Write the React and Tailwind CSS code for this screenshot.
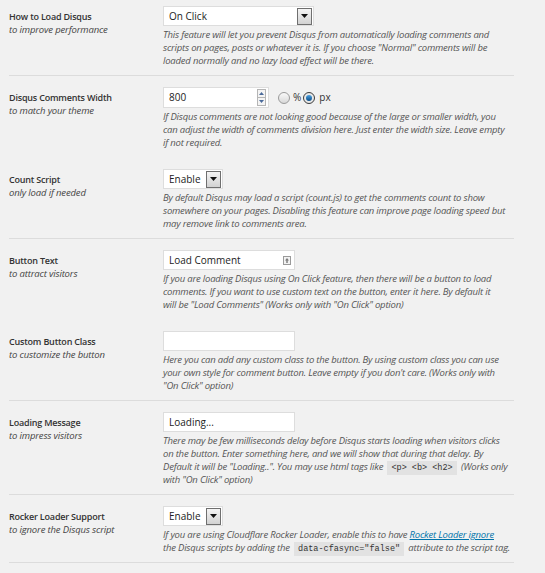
import React from 'react';

const Arrow = () => (
  <svg width="7" height="4" viewBox="0 0 7 4">
    <path d="M0 0h7L3.5 4z" fill="#111" />
  </svg>
);

const Select = ({ value, wide }) => (
  <div
    className={`flex h-[20px] items-center justify-between border border-[#dddddd] bg-white pl-[5px] pr-px ${
      wide ? 'w-[151px]' : 'w-[60px]'
    }`}
  >
    <span className="text-[10px] text-[#222]">{value}</span>
    <span className="flex h-[17px] w-[15px] items-center justify-center border border-[#6f6f6f] bg-gradient-to-b from-[#f4f4f4] to-[#d2d2d2]">
      <Arrow />
    </span>
  </div>
);

const TextInput = ({ value, icon }) => (
  <div className="flex h-[20px] w-[132px] items-center justify-between border border-[#dddddd] bg-white pl-[5px] pr-[3px]">
    <span className="text-[10px] text-[#222]">{value}</span>
    {icon && (
      <svg width="8" height="9" viewBox="0 0 8 9">
        <rect x="0.5" y="0.5" width="7" height="8" fill="#f2f2f2" stroke="#9a9a9a" />
        <path d="M4 2L2 4.5h1.3V7h1.4V4.5H6z" fill="#7a7a7a" />
      </svg>
    )}
  </div>
);

const Code = ({ children }) => (
  <code className="mx-[2px] bg-[#e2e2e2] px-[4px] py-[2px] font-['Liberation_Mono',monospace] text-[8.5px] leading-none not-italic tracking-normal text-[#333]">
    {children}
  </code>
);

const Radio = ({ checked }) =>
  checked ? (
    <span className="flex h-[12px] w-[12px] items-center justify-center rounded-full border border-[#3c3c3c] bg-[#e8e8e8]">
      <span className="block h-[6px] w-[6px] rounded-full bg-gradient-to-b from-[#4aa0e0] to-[#0a4f8a]" />
    </span>
  ) : (
    <span className="block h-[12px] w-[12px] rounded-full border border-[#9a9a9a] bg-gradient-to-b from-[#fafafa] to-[#d8d8d8]" />
  );

const WidthInput = () => (
  <div className="flex items-center">
    <div className="flex h-[21px] w-[106px] items-center justify-between border border-[#dddddd] bg-white pl-[5px] pr-[2px]">
      <span className="text-[10px] text-[#222]">800</span>
      <span className="flex h-[17px] w-[9px] flex-col border border-[#b5b5b5] bg-[#f4f4f4]">
        <span className="flex flex-1 items-center justify-center border-b border-[#b5b5b5]">
          <svg width="5" height="3" viewBox="0 0 5 3">
            <path d="M0 3h5L2.5 0z" fill="#4a6a9a" />
          </svg>
        </span>
        <span className="flex flex-1 items-center justify-center">
          <svg width="5" height="3" viewBox="0 0 5 3">
            <path d="M0 0h5L2.5 3z" fill="#4a6a9a" />
          </svg>
        </span>
      </span>
    </div>
    <span className="ml-[9px]"><Radio /></span>
    <span className="ml-[3px] text-[10px] text-[#333]">%</span>
    <span className="ml-[2px]"><Radio checked /></span>
    <span className="ml-[4px] text-[10px] text-[#333]">px</span>
  </div>
);

const rows = [
  {
    label: 'How to Load Disqus',
    sub: 'to improve performance',
    control: <Select value="On Click" wide />,
    line: true,
    desc: [
      'This feature will let you prevent Disqus from automatically loading comments and',
      'scripts on pages, posts or whatever it is. If you choose "Normal" comments will be',
      'loaded normally and no lazy load effect will be there.',
    ],
  },
  {
    label: 'Disqus Comments Width',
    sub: 'to match your theme',
    control: <WidthInput />,
    line: false,
    desc: [
      'If Disqus comments are not looking good because of the large or smaller width, you',
      'can adjust the width of comments division here. Just enter the width size. Leave empty',
      'if not required.',
    ],
  },
  {
    label: 'Count Script',
    sub: 'only load if needed',
    control: <Select value="Enable" />,
    line: true,
    desc: [
      'By default Disqus may load a script (count.js) to get the comments count to show',
      'somewhere on your pages. Disabling this feature can improve page loading speed but',
      'may remove link to comments area.',
    ],
  },
  {
    label: 'Button Text',
    sub: 'to attract visitors',
    control: <TextInput value="Load Comment" icon />,
    line: false,
    desc: [
      'If you are loading Disqus using On Click feature, then there will be a button to load',
      'comments. If you want to use custom text on the button, enter it here. By default it',
      'will be "Load Comments" (Works only with "On Click" option)',
    ],
  },
  {
    label: 'Custom Button Class',
    sub: 'to customize the button',
    control: <TextInput value="" />,
    line: true,
    desc: [
      'Here you can add any custom class to the button. By using custom class you can use',
      "your own style for comment button. Leave empty if you don't care. (Works only with",
      '"On Click" option)',
    ],
  },
  {
    label: 'Loading Message',
    sub: 'to impress visitors',
    control: <TextInput value="Loading..." />,
    line: true,
    desc: [
      'There may be few milliseconds delay before Disqus starts loading when visitors clicks',
      'on the button. Enter something here, and we will show that during that delay. By',
      <>
        Default it will be "Loading..". You may use html tags like <Code>{'<p>  <b>  <h2>'}</Code> (Works only
      </>,
      'with "On Click" option)',
    ],
  },
  {
    label: 'Rocker Loader Support',
    sub: 'to ignore the Disqus script',
    control: <Select value="Enable" />,
    line: true,
    desc: [
      <>
        If you are using Cloudflare Rocker Loader, enable this to have{' '}
        <a href="#" className="text-[#0073aa] underline">Rocket Loader ignore</a>
      </>,
      <>
        the Disqus scripts by adding the <Code>data-cfasync="false"</Code> attribute to the script tag.
      </>,
    ],
  },
];

export default function App() {
  return (
    <div className="min-h-screen bg-[#f1f1f1] pl-[9px] pr-[31px] font-['Open_Sans',sans-serif]">
      {rows.map((row, i) => (
        <div
          key={row.label}
          className={`flex border-b ${i === 0 ? 'pt-[6px]' : 'pt-[11px]'} pb-[8px] ${
            row.line ? 'border-[#dcdcdc]' : 'border-transparent'
          }`}
        >
          <div className="w-[154px] shrink-0 pt-[4px] leading-[13px]">
            <div className="text-[9px] font-semibold tracking-[-0.2px] text-[#333]">{row.label}</div>
            <div className="text-[9.5px] italic tracking-[-0.15px] text-[#444]">{row.sub}</div>
          </div>
          <div className="flex-1">
            {row.control}
            <div className="mt-[2px] whitespace-nowrap text-[9.5px] leading-[13px] italic tracking-[-0.2px] text-[#555]">
              {row.desc.map((line, j) => (
                <div key={j} className="h-[13px]">{line}</div>
              ))}
            </div>
          </div>
        </div>
      ))}
    </div>
  );
}
